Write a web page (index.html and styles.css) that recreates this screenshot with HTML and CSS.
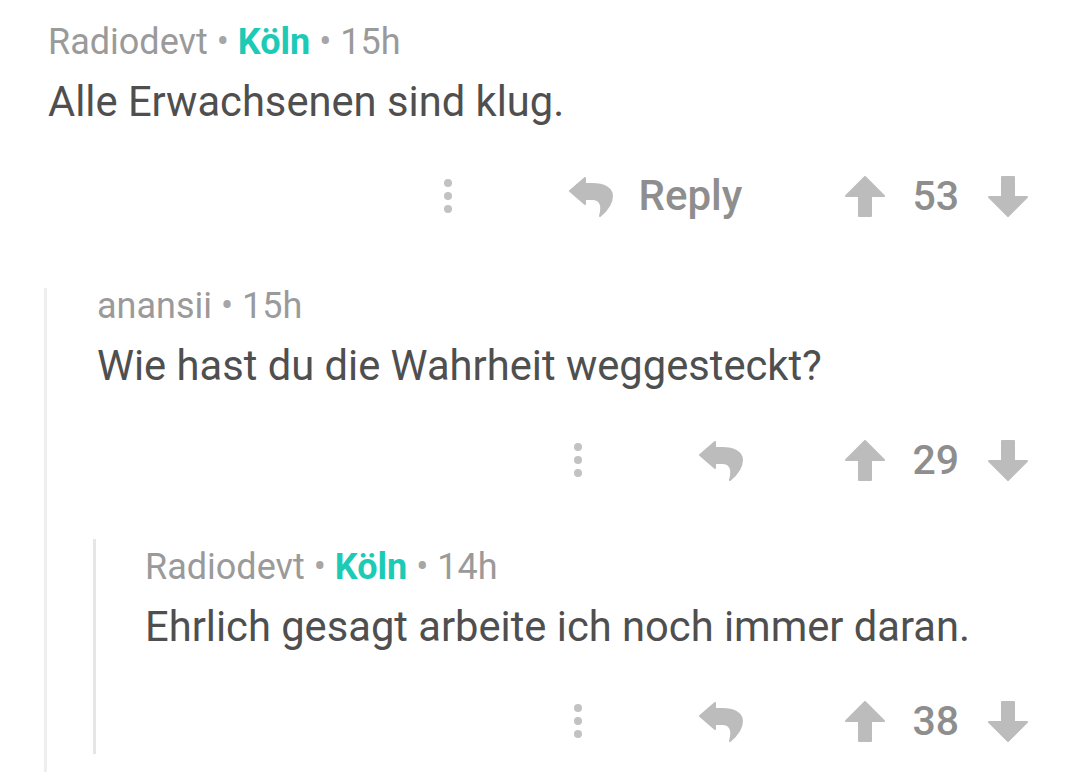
FILE: index.html
```html
<!DOCTYPE html>
<html lang="de">
<head>
<meta charset="utf-8">
<title>Kommentare</title>
<link rel="stylesheet" href="styles.css">
</head>
<body>
<div class="page">
  <div class="comment first">
    <div class="meta"><span class="user">Radiodevt</span> <span class="sep">•</span> <span class="loc">Köln</span> <span class="sep">•</span> <span class="time">15h</span></div>
    <div class="text">Alle Erwachsenen sind klug.</div>
    <div class="actions">
      <svg class="dots" width="8" height="34" viewBox="0 0 8 34"><circle cx="4" cy="4" r="4"/><circle cx="4" cy="17" r="4"/><circle cx="4" cy="30" r="4"/></svg>
      <div class="reply">
        <svg class="reply-icon" width="44" height="41" viewBox="-1 -1 44 41"><path d="M0 14 L15 1 L15 7 L22 7 C34 7 42 11 42 19 C42 28 36 34 30 39 C32 32 33 22 22 22 L15 22 L15 27 Z"/></svg>
        <span class="reply-label">Reply</span>
      </div>
      <div class="vote">
        <svg class="arrow" width="40" height="41" viewBox="-1 -1 40 41"><path d="M19 0 L38 19 L25 19 L25 39 L13 39 L13 19 L0 19 Z"/></svg>
        <span class="count">53</span>
        <svg class="arrow" width="40" height="41" viewBox="-1 -1 40 41"><path d="M19 39 L38 20 L25 20 L25 0 L13 0 L13 20 L0 20 Z"/></svg>
      </div>
    </div>
  </div>

  <div class="thread">
    <div class="comment">
      <div class="meta"><span class="user">anansii</span> <span class="sep">•</span> <span class="time">15h</span></div>
      <div class="text">Wie hast du die Wahrheit weggesteckt?</div>
      <div class="actions">
        <svg class="dots" width="8" height="34" viewBox="0 0 8 34"><circle cx="4" cy="4" r="4"/><circle cx="4" cy="17" r="4"/><circle cx="4" cy="30" r="4"/></svg>
        <div class="reply">
          <svg class="reply-icon" width="44" height="41" viewBox="-1 -1 44 41"><path d="M0 14 L15 1 L15 7 L22 7 C34 7 42 11 42 19 C42 28 36 34 30 39 C32 32 33 22 22 22 L15 22 L15 27 Z"/></svg>
        </div>
        <div class="vote">
          <svg class="arrow" width="40" height="41" viewBox="-1 -1 40 41"><path d="M19 0 L38 19 L25 19 L25 39 L13 39 L13 19 L0 19 Z"/></svg>
          <span class="count">29</span>
          <svg class="arrow" width="40" height="41" viewBox="-1 -1 40 41"><path d="M19 39 L38 20 L25 20 L25 0 L13 0 L13 20 L0 20 Z"/></svg>
        </div>
      </div>
    </div>

    <div class="thread inner">
      <div class="comment">
        <div class="meta"><span class="user">Radiodevt</span> <span class="sep">•</span> <span class="loc">Köln</span> <span class="sep">•</span> <span class="time">14h</span></div>
        <div class="text">Ehrlich gesagt arbeite ich noch immer daran.</div>
        <div class="actions">
          <svg class="dots" width="8" height="34" viewBox="0 0 8 34"><circle cx="4" cy="4" r="4"/><circle cx="4" cy="17" r="4"/><circle cx="4" cy="30" r="4"/></svg>
          <div class="reply">
            <svg class="reply-icon" width="44" height="41" viewBox="-1 -1 44 41"><path d="M0 14 L15 1 L15 7 L22 7 C34 7 42 11 42 19 C42 28 36 34 30 39 C32 32 33 22 22 22 L15 22 L15 27 Z"/></svg>
          </div>
          <div class="vote">
            <svg class="arrow" width="40" height="41" viewBox="-1 -1 40 41"><path d="M19 0 L38 19 L25 19 L25 39 L13 39 L13 19 L0 19 Z"/></svg>
            <span class="count">38</span>
            <svg class="arrow" width="40" height="41" viewBox="-1 -1 40 41"><path d="M19 39 L38 20 L25 20 L25 0 L13 0 L13 20 L0 20 Z"/></svg>
          </div>
        </div>
      </div>
    </div>
  </div>
</div>
</body>
</html>
```

FILE: styles.css
```css
html, body {
  margin: 0;
  padding: 0;
  background: #ffffff;
}

body {
  font-family: Roboto, "Liberation Sans", sans-serif;
  width: 1080px;
  height: 772px;
  overflow: hidden;
}

.page {
  padding: 24px 53px 0 48px;
}

.comment {
  display: flex;
  flex-direction: column;
}

.meta {
  font-size: 36px;
  line-height: 36px;
  color: #9a9a9a;
  white-space: nowrap;
}

.meta .loc {
  color: #1ccab5;
  font-weight: 700;
}

.meta .sep {
  color: #a6a6a6;
}

.text {
  margin-top: 14px;
  font-size: 41.7px;
  line-height: 56px;
  color: #4f4f4f;
  white-space: nowrap;
}

.actions {
  margin-top: 41px;
  height: 50px;
  display: flex;
  align-items: center;
  justify-content: flex-end;
}

.dots {
  fill: #c2c2c2;
  margin-right: 118px;
}

.reply {
  display: flex;
  align-items: center;
  margin-right: 104px;
}

.reply-icon {
  fill: #bcbcbc;
  stroke: #bcbcbc;
  stroke-width: 2;
  stroke-linejoin: round;
  margin-left: -1px;
  margin-right: -1px;
}

.reply-label {
  margin-left: 27px;
  font-size: 42px;
  font-weight: 500;
  color: #8e8e8e;
  line-height: 50px;
}

.vote {
  display: flex;
  align-items: center;
}

.arrow {
  fill: #bcbcbc;
  stroke: #bcbcbc;
  stroke-width: 2;
  stroke-linejoin: round;
  margin: 0 -1px;
}

.count {
  font-size: 41px;
  font-weight: 500;
  color: #8e8e8e;
  margin: 0 30px 0 28px;
  line-height: 50px;
}

.thread {
  margin-top: 67px;
  margin-left: -4px;
  border-left: 3px solid #eeeeee;
  padding-left: 50px;
  padding-bottom: 40px;
}

.thread.inner {
  margin-top: 54px;
  padding-top: 10px;
  border-left-color: #e6e6e6;
  padding-left: 49px;
  padding-bottom: 8px;
}
```
